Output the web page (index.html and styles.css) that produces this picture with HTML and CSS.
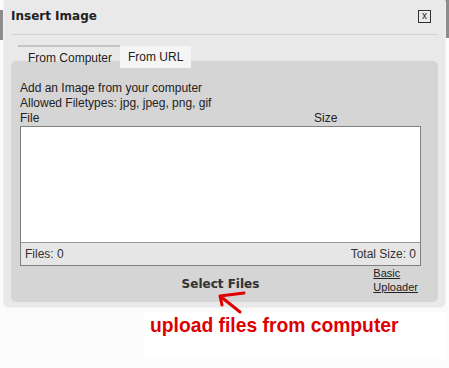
FILE: index.html
```html
<!DOCTYPE html>
<html lang="en">
<head>
    <meta charset="UTF-8">
    <meta name="viewport" content="width=device-width, initial-scale=1.0">
    <title>Insert Image</title>
    <link rel="stylesheet" href="styles.css">
</head>
<body>
    <div class="page">
        <div class="dialog">
            <div class="dialog-head">
                <h1>Insert Image</h1>
                <span class="close-btn">x</span>
            </div>
            <div class="tabs">
                <span class="tab active">From Computer</span>
                <span class="tab">From URL</span>
            </div>
            <div class="panel">
                <p>Add an Image from your computer</p>
                <p>Allowed Filetypes: jpg, jpeg, png, gif</p>
                <div class="file-head">
                    <span>File</span>
                    <span>Size</span>
                </div>
                <div class="file-list">
                    <div class="file-rows"></div>
                    <div class="file-foot">
                        <span>Files: 0</span>
                        <span>Total Size: 0</span>
                    </div>
                </div>
                <div class="actions">
                    <span></span>
                    <button type="button" class="select-btn">Select Files</button>
                    <a href="#" class="basic-link">Basic<br>Uploader</a>
                </div>
            </div>
        </div>

        <!-- annotation -->
        <div class="note">upload files from computer</div>
        <svg class="arrow" width="40" height="30" viewBox="0 0 40 30">
            <path d="M5 6 L29 3 M5 6 L7 15 M5 6 L25 22" stroke="#e00000" stroke-width="3" fill="none" stroke-linecap="round"/>
        </svg>
    </div>
</body>
</html>
```

FILE: styles.css
```css
body {
    margin: 0;
    background-color: #fbfbfb;
    font-family: "Liberation Sans", Arial, sans-serif;
    color: #222;
}
.page {
    position: relative;
    width: 449px;
    height: 368px;
    overflow: hidden;
}
/* bits of the page behind the dialog */
.page::before,
.page::after {
    content: "";
    position: absolute;
    background-color: #8c8c8c;
    width: 4px;
}
.page::before {
    left: 0;
    top: 10px;
    height: 30px;
    width: 3px;
}
.page::after {
    right: 0;
    top: 0;
    height: 38px;
}
.dialog {
    position: relative;
    z-index: 1;
    margin: -3px 3px 0 3px;
    padding: 0 7px 5px 7px;
    background-color: #e9e9e9;
    border: 1px solid #f1f1f1;
    border-radius: 6px;
}
.dialog-head {
    display: flex;
    align-items: center;
    justify-content: space-between;
    height: 36px;
    padding-right: 7px;
    border-bottom: 1px solid #d2d2d2;
}
h1 {
    margin: 0 0 0 0;
    font-family: "DejaVu Sans", Verdana, sans-serif;
    font-size: 12px;
    font-weight: bold;
    color: #222;
}
.close-btn {
    display: flex;
    align-items: center;
    justify-content: center;
    width: 11px;
    height: 11px;
    border: 1px solid #333;
    font-size: 10px;
    line-height: 1;
    color: #222;
}
.tabs {
    position: relative;
    z-index: 1;
    display: flex;
    margin: 10px 0 -9px 7px;
    font-size: 12px;
}
.tab {
    padding: 4px 8px 0 8px;
    height: 18px;
    margin-top: 1px;
    background-color: #f5f5f5;
}
.tab.active {
    margin-top: 0;
    height: 19px;
    padding: 4px 8px 0 10px;
    background-color: transparent;
    border-top: 2px solid #c4c4c4;
}
.panel {
    padding: 20px 17px 0 9px;
    background-color: #d5d5d5;
    border-radius: 5px;
    font-size: 12px;
}
.panel p {
    margin: 0;
    line-height: 15px;
}
.file-head {
    display: grid;
    grid-template-columns: 1fr 107px;
    line-height: 15px;
    height: 15px;
}
.file-list {
    height: 138px;
    display: flex;
    flex-direction: column;
    border: 1px solid #808080;
    background-color: #fff;
}
.file-rows {
    flex: 1;
}
.file-foot {
    display: flex;
    justify-content: space-between;
    height: 22px;
    align-items: center;
    padding: 0 4px 0 4px;
    border-top: 1px solid #999;
    background-color: #e6e6e6;
    color: #333;
}
.actions {
    display: grid;
    grid-template-columns: 1fr auto 1fr;
    height: 36px;
}
.select-btn {
    align-self: center;
    padding: 0;
    border: 0;
    background: none;
    font-family: "DejaVu Sans", Verdana, sans-serif;
    font-size: 12px;
    font-weight: bold;
    color: #333;
    text-shadow: 0 0 1px #bbb;
}
.basic-link {
    justify-self: end;
    margin: 0 3px 0 0;
    padding-top: 0;
    font-size: 11px;
    line-height: 14px;
    color: #222;
}
.note {
    margin: 4px 2px 0 144px;
    height: 47px;
    padding: 3px 0 0 6px;
    box-sizing: border-box;
    background-color: #fff;
    font-size: 19.3px;
    font-weight: bold;
    color: #dd0000;
}
.arrow {
    position: absolute;
    z-index: 2;
    left: 215px;
    top: 290px;
}
```
